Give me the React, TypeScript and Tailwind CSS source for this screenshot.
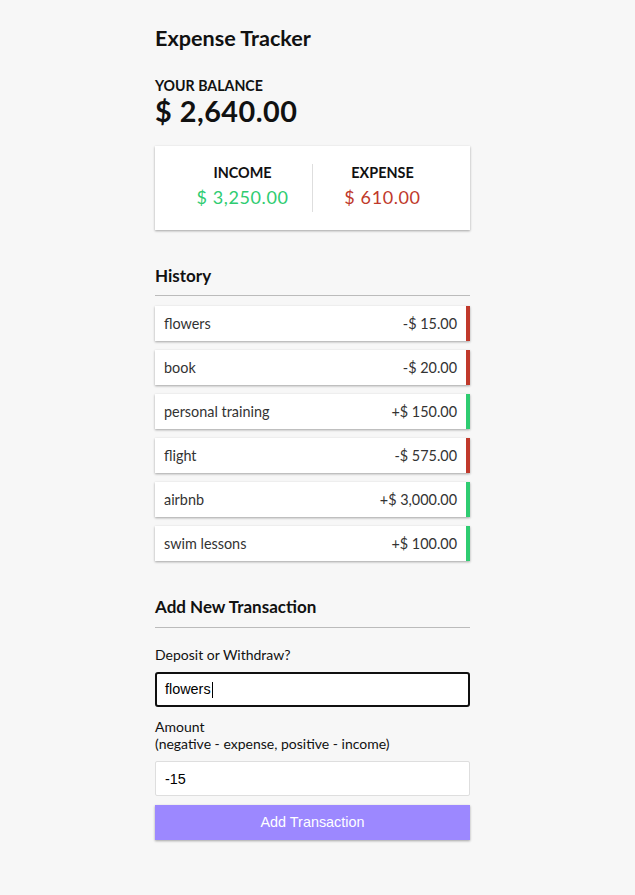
const transactions = [
  { id: 1, text: "flowers", amount: -15 },
  { id: 2, text: "book", amount: -20 },
  { id: 3, text: "personal training", amount: 150 },
  { id: 4, text: "flight", amount: -575 },
  { id: 5, text: "airbnb", amount: 3000 },
  { id: 6, text: "swim lessons", amount: 100 },
];

const fmt = (n: number) =>
  Math.abs(n).toLocaleString("en-US", { minimumFractionDigits: 2, maximumFractionDigits: 2 });

const shadow = "shadow-[0_1px_3px_rgba(0,0,0,0.12),0_1px_2px_rgba(0,0,0,0.24)]";

const App = () => {
  return (
    <div className="min-h-screen bg-[#f7f7f7] pr-[10px] font-['Lato','Liberation_Sans',sans-serif] text-[#111]">
      <div className="w-[315px] mx-auto pt-[25px] pb-[27px]">
        <h2 className="text-[21.6px] leading-[26px] font-bold">Expense Tracker</h2>

        <h4 className="mt-[26px] text-[14.2px] leading-[17px] font-bold uppercase">Your Balance</h4>
        <h1 className="text-[28.8px] leading-[35px] font-bold tracking-[0.5px]">$ 2,640.00</h1>

        <div className={`mt-[17px] bg-white ${shadow} p-[18px] flex`}>
          <div className="flex-1 text-center border-r border-[#dedede]">
            <h4 className="text-[14.4px] leading-[17px] font-bold uppercase">Income</h4>
            <p className="my-[4.5px] text-[18px] leading-[22px] tracking-[0.6px] text-[#2ecc71]">$ 3,250.00</p>
          </div>
          <div className="flex-1 text-center">
            <h4 className="text-[14.4px] leading-[17px] font-bold uppercase">Expense</h4>
            <p className="my-[4.5px] text-[18px] leading-[22px] tracking-[0.6px] text-[#c0392b]">$ 610.00</p>
          </div>
        </div>

        <h3 className="mt-[36px] pb-[9px] border-b border-[#bbb] text-[17px] leading-[20px] font-bold">History</h3>
        <ul className="mt-[10px] flex flex-col gap-[9px]">
          {transactions.map((t) => (
            <li
              key={t.id}
              className={`h-[35px] bg-white ${shadow} text-[#333] flex justify-between items-center px-[9px] text-[14.4px] leading-[17px] border-r-[4.5px] ${
                t.amount < 0 ? "border-[#c0392b]" : "border-[#2ecc71]"
              }`}
            >
              <span>{t.text}</span>
              <span>
                {t.amount < 0 ? "-" : "+"}$ {fmt(t.amount)}
              </span>
            </li>
          ))}
        </ul>

        <h3 className="mt-[36px] pb-[10px] border-b border-[#bbb] text-[17px] leading-[20px] font-bold">
          Add New Transaction
        </h3>
        <form className="mt-[18px]" onSubmit={(e) => e.preventDefault()}>
          <label className="block text-[14px] leading-[17px]">Deposit or Withdraw?</label>
          <div className="mt-[9px] h-[35px] bg-white border-2 border-[#101010] rounded-[3px] pl-[8px] flex items-center font-['Liberation_Sans',Arial,sans-serif] text-[14.4px] text-black">
            <span>flowers</span>
            <span className="ml-[1px] w-px h-[16px] bg-black" />
          </div>

          <label className="block mt-[11px] text-[14px] leading-[17px]">
            Amount <br />
            (negative - expense, positive - income)
          </label>
          <input
            type="text"
            readOnly
            value="-15"
            className="block w-full mt-[9px] h-[35px] bg-white border border-[#dedede] rounded-[2px] px-[9px] font-['Liberation_Sans',Arial,sans-serif] text-[14.4px] text-black outline-none"
          />
          <button
            type="submit"
            className={`block w-full mt-[9px] h-[35px] bg-[#9c88ff] ${shadow} text-white font-['Liberation_Sans',Arial,sans-serif] text-[14.4px]`}
          >
            Add Transaction
          </button>
        </form>
      </div>
    </div>
  );
};

export default App;
